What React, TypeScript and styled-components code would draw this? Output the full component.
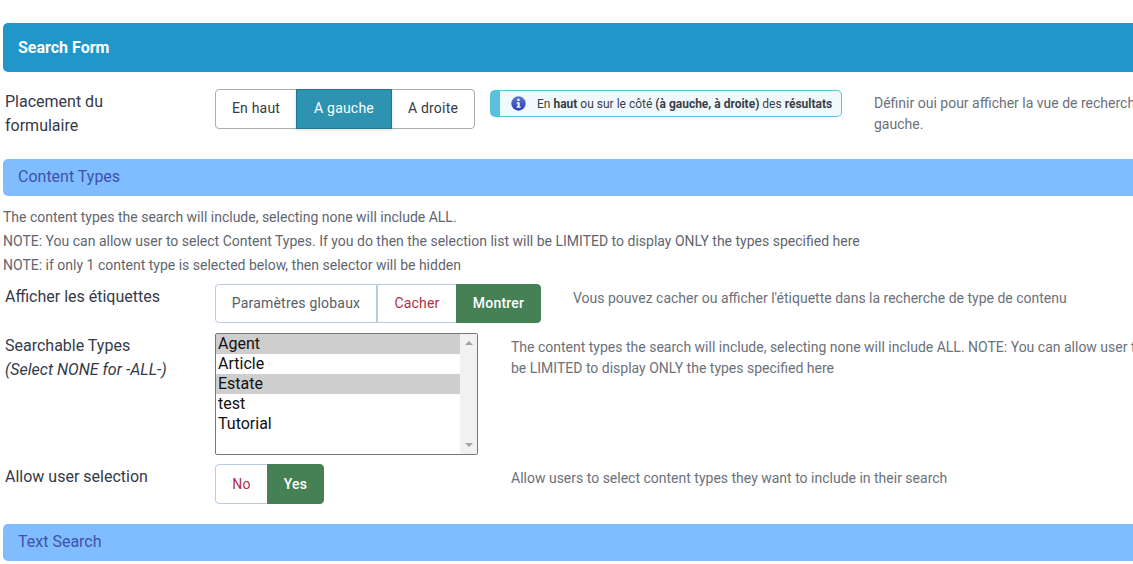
import React from "react";
import styled, { createGlobalStyle } from "styled-components";

const GlobalStyle = createGlobalStyle`
  html, body {
    margin: 0;
    padding: 0;
    height: 100%;
    overflow: hidden;
    background: #fff;
    font-family: Roboto, "Liberation Sans", sans-serif;
  }
`;

const Page = styled.div`
  width: 1300px;
  padding: 23px 0 0 3px;
  box-sizing: border-box;
`;

const FormTitle = styled.div`
  display: flex;
  align-items: center;
  height: 49px;
  padding-left: 15px;
  background-color: #2196c9;
  border-radius: 5px;
  color: #fff;
  font-size: 16px;
  font-weight: 700;
`;

const SectionBar = styled.div<{ $top: number }>`
  display: flex;
  align-items: center;
  height: 37px;
  margin-top: ${(props) => props.$top}px;
  padding: 0 0 3px 15px;
  box-sizing: border-box;
  background-color: #7fbdfe;
  border-radius: 5px;
  color: #3f51ad;
  font-size: 16px;
`;

const Row = styled.div<{ $top: number }>`
  display: grid;
  grid-template-columns: 210px auto 1fr;
  align-items: start;
  margin-top: ${(props) => props.$top}px;
  padding-left: 2px;
`;

const ContentRow = styled(Row)`
  grid-template-columns: 210px 263px 1fr;
`;

const Label = styled.label`
  padding-top: 1px;
  color: #343a4a;
  font-size: 16px;
  line-height: 24px;
`;

const Hint = styled.em`
  display: block;
`;

const Group = styled.div`
  display: inline-flex;
`;

const ToggleButton = styled.button<{
  $active?: "teal" | "green";
  $tone?: "red" | "grey" | "dark";
  $flush?: boolean;
  $width: number;
  $height: number;
}>`
  width: ${(props) => props.$width}px;
  height: ${(props) => props.$height}px;
  margin-left: ${(props) => (props.$flush ? 0 : -1)}px;
  padding: 0 0 1px;
  font-family: inherit;
  font-size: 14px;
  letter-spacing: 0.2px;
  border: 1px solid ${(props) => (props.$tone === "dark" ? "#adadad" : "#b8cbe3")};
  background-color: #fff;
  color: ${(props) =>
    props.$tone === "red" ? "#b32d43" : props.$tone === "dark" ? "#333b47" : "#565d68"};

  ${(props) =>
    props.$active === "teal" &&
    `
    background-color: #2e93b0;
    border-color: #23788f;
    color: #fff;
    box-shadow: 0 1px 3px rgba(0, 0, 0, 0.15);
    position: relative;
  `}
  ${(props) =>
    props.$active === "green" &&
    `
    background-color: #468055;
    border-color: #468055;
    color: #fff;
    font-weight: 500;
  `}

  &:first-child {
    margin-left: 0;
    border-radius: 4px 0 0 4px;
  }
  &:last-child {
    border-radius: 0 4px 4px 0;
  }
`;

const Notice = styled.div`
  display: flex;
  align-items: center;
  flex: none;
  box-sizing: border-box;
  width: 352px;
  height: 27px;
  margin-top: 1px;
  padding-left: 11px;
  background-color: #f0f9fd;
  border: 1px solid #5bc0de;
  border-left: 10px solid #5bc0de;
  border-radius: 5px;
  color: #3a3f47;
  font-size: 12px;
  white-space: nowrap;
  gap: 11px;

  b {
    font-weight: 700;
  }
`;

const Description = styled.div<{ $left: number }>`
  margin-left: ${(props) => props.$left}px;
  padding-top: 4px;
  color: #6b717a;
  font-size: 14px;
  line-height: 21px;
  white-space: nowrap;
`;

const TopRow = styled.div`
  display: flex;
  align-items: flex-start;
  margin-top: 17px;
  padding-left: 2px;
`;

const TopLabel = styled(Label)`
  width: 210px;
  flex: none;
`;

const TopGroup = styled(Group)`
  flex: none;
  margin-right: 15px;

  button {
    padding-bottom: 3px;
  }
`;

const NoteBlock = styled.div`
  margin-top: 9px;
  color: #5f6670;
  font-size: 14px;
  line-height: 24px;
`;

const SelectWrap = styled.div`
  position: relative;
  width: 263px;
  height: 122px;
`;

const TypeSelect = styled.select`
  display: block;
  box-sizing: border-box;
  width: 263px;
  height: 122px;
  padding: 0;
  border: 1px solid #767676;
  border-radius: 2px;
  background: #fff;
  color: #111;
  font-family: Roboto, "Liberation Sans", sans-serif;
  font-size: 16px;
  overflow: hidden;
  outline: none;

  option {
    height: 20px;
    min-height: 20px;
    padding: 0 2px;
    line-height: 20px;
    box-sizing: border-box;
  }
  option:checked {
    background: #cecece linear-gradient(#cecece, #cecece);
    color: #111;
  }
`;

const ScrollTrack = styled.div`
  position: absolute;
  top: 1px;
  right: 1px;
  bottom: 1px;
  width: 17px;
  display: flex;
  flex-direction: column;
  justify-content: space-between;
  align-items: center;
  padding: 7px 0;
  box-sizing: border-box;
  background-color: #f1f1f1;
  pointer-events: none;
`;

const ScrollArrow = styled.span<{ $down?: boolean }>`
  width: 0;
  height: 0;
  border-left: 4px solid transparent;
  border-right: 4px solid transparent;
  ${(props) =>
    props.$down ? "border-top: 4px solid #a3a3a3;" : "border-bottom: 4px solid #a3a3a3;"}
`;

function InfoIcon() {
  return (
    <svg width="15" height="15" viewBox="0 0 15 15">
      <defs>
        <linearGradient id="info-fill" x1="0" y1="0" x2="0" y2="1">
          <stop offset="0" stopColor="#5a78dc" />
          <stop offset="1" stopColor="#2c3fae" />
        </linearGradient>
      </defs>
      <circle cx="7.5" cy="7.5" r="7.2" fill="url(#info-fill)" />
      <rect x="6.4" y="2.8" width="2.2" height="2.2" rx="0.6" fill="#fff" />
      <path d="M5.6 6.2h3v4.4h1v1.2H5.6v-1.2h1V7.4h-1z" fill="#fff" />
    </svg>
  );
}

function App() {
  return (
    <Page>
      <GlobalStyle />
      <FormTitle>Search Form</FormTitle>

      <TopRow>
        <TopLabel>
          Placement du
          <br />
          formulaire
        </TopLabel>
        <TopGroup>
          <ToggleButton $tone="dark" $width={82} $height={40}>En haut</ToggleButton>
          <ToggleButton $active="teal" $width={96} $height={40}>A gauche</ToggleButton>
          <ToggleButton $tone="dark" $width={84} $height={40}>A droite</ToggleButton>
        </TopGroup>
        <Notice>
          <InfoIcon />
          <span>
            En <b>haut</b> ou sur le côté <b>(à gauche, à droite)</b> des <b>résultats</b>
          </span>
        </Notice>
        <Description $left={32}>
          Définir oui pour afficher la vue de recherche à
          <br />
          gauche.
        </Description>
      </TopRow>

      <SectionBar $top={21}>Content Types</SectionBar>

      <NoteBlock>
        The content types the search will include, selecting none will include ALL.
        <br />
        NOTE: You can allow user to select Content Types. If you do then the selection list will be LIMITED to display ONLY the types specified here
        <br />
        NOTE: if only 1 content type is selected below, then selector will be hidden
      </NoteBlock>

      <Row $top={7}>
        <Label>Afficher les étiquettes</Label>
        <Group>
          <ToggleButton $width={162} $height={39}>Paramètres globaux</ToggleButton>
          <ToggleButton $flush $tone="red" $width={80} $height={39}>Cacher</ToggleButton>
          <ToggleButton $active="green" $width={85} $height={39}>Montrer</ToggleButton>
        </Group>
        <Description $left={32}>Vous pouvez cacher ou afficher l'étiquette dans la recherche de type de contenu</Description>
      </Row>

      <ContentRow $top={10}>
        <Label>
          Searchable Types
          <Hint>(Select NONE for -ALL-)</Hint>
        </Label>
        <SelectWrap>
          <TypeSelect multiple defaultValue={["Agent", "Estate"]} size={6}>
            <option>Agent</option>
            <option>Article</option>
            <option>Estate</option>
            <option>test</option>
            <option>Tutorial</option>
          </TypeSelect>
          <ScrollTrack>
            <ScrollArrow />
            <ScrollArrow $down />
          </ScrollTrack>
        </SelectWrap>
        <Description $left={33}>
          The content types the search will include, selecting none will include ALL. NOTE: You can allow user to select Content Types. If you do then the selection list will
          <br />
          be LIMITED to display ONLY the types specified here
        </Description>
      </ContentRow>

      <ContentRow $top={9}>
        <Label>Allow user selection</Label>
        <Group>
          <ToggleButton $tone="red" $width={53} $height={40}>No</ToggleButton>
          <ToggleButton $active="green" $width={57} $height={40}>Yes</ToggleButton>
        </Group>
        <Description $left={33}>Allow users to select content types they want to include in their search</Description>
      </ContentRow>

      <SectionBar $top={20}>Text Search</SectionBar>
    </Page>
  );
}

export default App;
